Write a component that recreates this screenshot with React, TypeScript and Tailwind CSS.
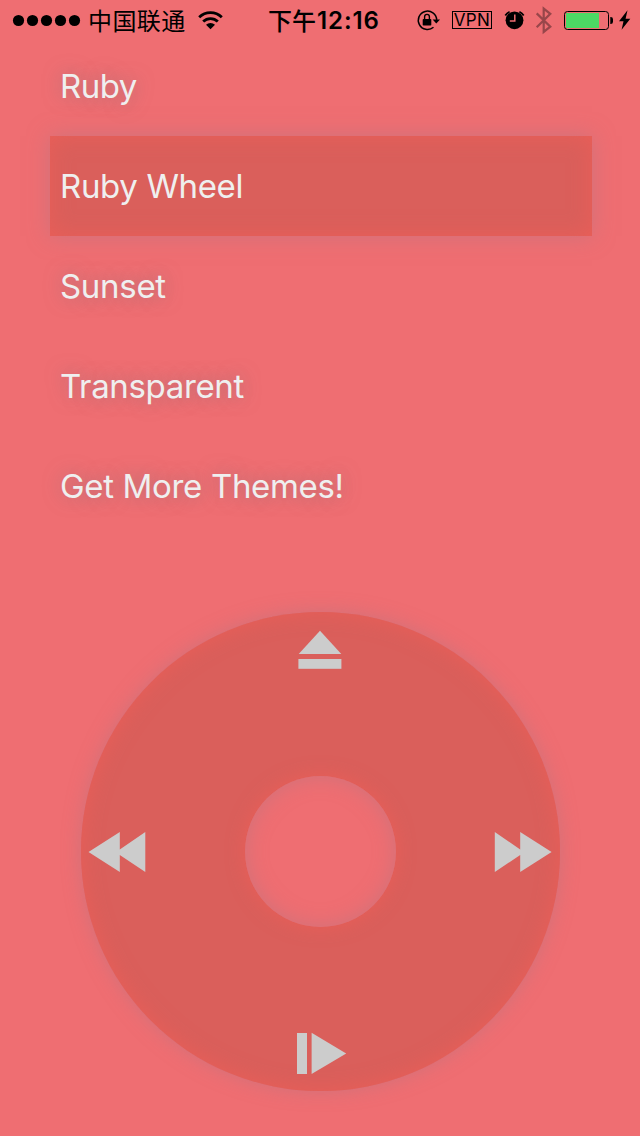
import React from "react";

const items = [
  { label: "Ruby", tracking: "tracking-[-0.55px]" },
  { label: "Ruby Wheel", tracking: "tracking-[-0.35px]", selected: true },
  { label: "Sunset", tracking: "tracking-[-0.3px]" },
  { label: "Transparent", tracking: "tracking-[-0.35px]" },
  { label: "Get More Themes!", tracking: "tracking-[-0.33px]" },
];

function StatusBar() {
  return (
    <header className="flex h-10 w-full shrink-0 text-black">
      <svg className="ml-3 h-10 w-[70px] shrink-0" viewBox="12 0 70 40" fill="currentColor">
        {[18.5, 32.5, 46.5, 60.5, 74.5].map((cx) => (
          <circle key={cx} cx={cx} cy="20.5" r="5.6" />
        ))}
      </svg>
      <span className="ml-[6px] w-[98px] shrink-0 whitespace-nowrap font-['Noto_Sans_CJK_SC',sans-serif] text-[24px] font-normal leading-[40px] tracking-[0.4px]">
        中国联通
      </span>
      <svg className="ml-[10px] h-10 w-[28px] shrink-0" viewBox="196 0 28 40" fill="none" stroke="currentColor" strokeWidth="2.8">
        <path d="M199.2 17.3a16 16 0 0 1 22.6 0" />
        <path d="M203.2 21.6a10.4 10.4 0 0 1 14.6 0" />
        <path d="M206 24.8a6.4 6.4 0 0 1 9 0l-4.5 4.4z" fill="currentColor" stroke="none" />
      </svg>
      <span className="ml-[44px] flex w-[114px] shrink-0 items-center whitespace-nowrap text-[24px] leading-[40px]">
        <span className="w-[49px] font-['Noto_Sans_CJK_SC',sans-serif] font-medium">下午</span>
        <span className="mt-px font-['Inter',sans-serif] font-semibold tracking-[0.9px]">12:16</span>
      </span>
      <svg className="ml-[32px] h-10 w-[28px] shrink-0" viewBox="414 0 28 40" fill="none" stroke="currentColor">
        <path d="M433.5 27.3a9.2 9.2 0 1 1 3.2-7.4" strokeWidth="1.5" />
        <path d="M432.6 19.4h7.4l-3.7 4.2z" fill="currentColor" stroke="none" />
        <rect x="422.7" y="19" width="8.6" height="6.6" rx="0.8" fill="currentColor" stroke="none" />
        <path d="M424.6 19.4v-2.6a2.4 2.4 0 0 1 4.8 0v2.6" strokeWidth="1.4" />
      </svg>
      <span className="ml-[10px] mt-[11px] flex h-[18px] w-[40px] shrink-0 items-center justify-center border border-black font-['Inter',sans-serif] text-[17px] leading-none tracking-[0.4px]">
        VPN
      </span>
      <svg className="ml-[10px] h-10 w-[24px] shrink-0" viewBox="502 0 24 40" fill="none" stroke="currentColor">
        <circle cx="514.5" cy="20.3" r="8.9" fill="currentColor" stroke="none" />
        <path d="M505.3 15.5a10 10 0 0 1 4.3-3.8M519.4 11.7a10 10 0 0 1 4.3 3.8" strokeWidth="1.8" />
        <path d="M514.8 14.5v6.6h-5" stroke="#ef6e72" strokeWidth="1.5" />
      </svg>
      <svg className="ml-[8px] h-10 w-[20px] shrink-0" viewBox="534 0 20 40" fill="none" stroke="#98464a" strokeWidth="2.2">
        <path d="M536.7 13.4l13.6 13.2-6.6 5.3V8.6l6.6 5.2-13.6 13.4" />
      </svg>
      <svg className="ml-[8px] h-10 w-[72px] shrink-0" viewBox="562 0 72 40" fill="none" stroke="currentColor">
        <rect x="564.5" y="11.5" width="44" height="18" rx="3" />
        <rect x="566" y="13" width="33" height="15" fill="#4cd964" stroke="none" />
        <path d="M610.3 17h.4a2.3 2.3 0 0 1 2.3 2.3v2.4a2.3 2.3 0 0 1-2.3 2.3h-.4z" fill="currentColor" stroke="none" />
        <path d="M627.5 10.3L619 21.3h4.5L621.6 29.8 630.3 18.7h-4.7z" fill="currentColor" stroke="none" />
      </svg>
    </header>
  );
}

export default function App() {
  return (
    <div className="flex h-[1136px] w-[640px] flex-col overflow-hidden bg-[#ef6e72]">
      <StatusBar />
      <nav className="ml-[50px] mt-[-4px] flex w-[542px] flex-col">
        {items.map((item) => (
          <div
            key={item.label}
            className={
              item.selected
                ? "flex h-[100px] items-center bg-[#da5f5b] pl-[10px] shadow-[0_0_20px_rgba(188,116,128,0.65),inset_0_0_22px_rgba(237,94,87,0.85)]"
                : "flex h-[100px] items-center pl-[10px]"
            }
          >
            <span
              className={`whitespace-nowrap font-['Inter',sans-serif] text-[33px] leading-[40px] text-[#efefef] ${item.tracking} ${
                item.selected ? "" : "[text-shadow:0_0_18px_rgba(130,115,125,0.6)]"
              }`}
            >
              {item.label}
            </span>
          </div>
        ))}
      </nav>
      <div className="ml-[80.5px] mt-[76px] grid h-[479px] w-[479px] shrink-0 grid-cols-[164px_151px_164px] grid-rows-[164px_151px_164px] place-items-center rounded-full bg-[#da5f5b] shadow-[0_0_18px_rgba(188,116,128,0.62),inset_0_0_20px_rgba(237,94,87,0.85)]">
        <svg className="col-start-2 row-start-1 mr-px mt-[18px] h-[39px] w-[44px] self-start" viewBox="298 630 44 39" fill="#ccc">
          <path d="M320 630.7L341.3 654H298.7z" />
          <rect x="298.4" y="659" width="43" height="9.8" />
        </svg>
        <svg className="col-start-1 row-start-2 ml-[7.5px] h-[42px] w-[58px] justify-self-start" viewBox="88 831 58 42" fill="#ccc">
          <path d="M88.5 852L119.8 832v17.4L145.3 832v40L119.8 855v17z" />
        </svg>
        <div className="col-start-2 row-start-2 h-[151px] w-[151px] rounded-full bg-[#ef6e72] shadow-[0_0_18px_rgba(237,94,87,0.85),inset_0_0_20px_rgba(188,116,128,0.65)]" />
        <svg className="col-start-3 row-start-2 mr-[7.5px] h-[42px] w-[58px] justify-self-end" viewBox="494 831 58 42" fill="#ccc">
          <path d="M551.6 852L520.2 832v17.4L494.8 832v40L520.2 855v17z" />
        </svg>
        <svg className="col-start-2 row-start-3 mb-[16px] ml-[3px] h-[43px] w-[51px] self-end" viewBox="296 1032 51 43" fill="#ccc">
          <rect x="297" y="1033" width="10" height="41" />
          <path d="M311.6 1032.7L346.2 1053.4 311.6 1074z" />
        </svg>
      </div>
    </div>
  );
}
